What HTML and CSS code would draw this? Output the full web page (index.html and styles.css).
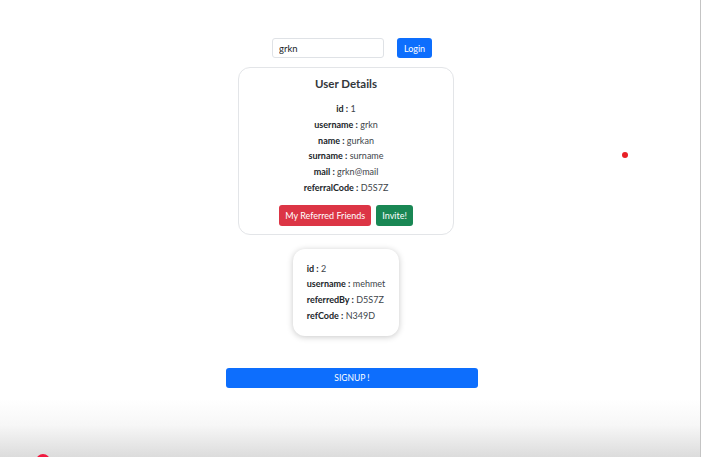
FILE: index.html
```html
<!DOCTYPE html>
<html>
<head>
<meta charset="utf-8">
<link rel="stylesheet" href="styles.css">
</head>
<body>
<div class="page">
  <main class="content">
    <div class="login-row">
      <input class="text-input" type="text" value="grkn">
      <button class="btn btn-primary btn-login">Login</button>
    </div>
    <section class="card user-card">
      <h2 class="card-title">User Details</h2>
      <div class="details">
        <p><b>id :</b> 1</p>
        <p><b>username :</b> grkn</p>
        <p><b>name :</b> gurkan</p>
        <p><b>surname :</b> surname</p>
        <p><b>mail :</b> grkn@mail</p>
        <p><b>referralCode :</b> D5S7Z</p>
      </div>
      <div class="actions">
        <button class="btn btn-danger">My Referred Friends</button>
        <button class="btn btn-success">Invite!</button>
      </div>
    </section>
    <section class="card friend-card">
      <p><b>id :</b> 2</p>
      <p><b>username :</b> mehmet</p>
      <p><b>referredBy :</b> D5S7Z</p>
      <p><b>refCode :</b> N349D</p>
    </section>
    <button class="btn btn-primary btn-signup">SIGNUP !</button>
  </main>
  <div class="shade"></div>
  <span class="cursor-dot"></span>
  <span class="corner-dot"></span>
</div>
</body>
</html>
```
FILE: styles.css
```css
* { box-sizing: border-box; }
html, body { margin: 0; padding: 0; background: #fff; }
body {
  font-family: Lato, "Open Sans", sans-serif;
  color: #212529;
  width: 702px;
  height: 457px;
  overflow: hidden;
}
.page {
  position: relative;
  width: 701px;
  height: 457px;
  border-right: 1px solid #c4c4c4;
  display: flex;
  flex-direction: column;
}
.content {
  display: flex;
  flex-direction: column;
  align-items: center;
  padding-top: 38px;
  padding-left: 2px;
}
.login-row {
  display: flex;
  align-items: center;
  gap: 13px;
  margin-left: 2px;
}
.text-input {
  width: 112px;
  height: 20px;
  border: 1px solid #dfe2e6;
  border-radius: 3px;
  padding: 0 6px;
  font-family: inherit;
  font-size: 9.5px;
  color: #212529;
  outline: none;
}
.btn {
  border: none;
  border-radius: 3px;
  color: #fff;
  font-family: inherit;
  font-size: 9px;
  padding: 0 6px;
  cursor: pointer;
}
.btn-primary { background: #0d6efd; }
.btn-danger { background: #dc3545; }
.btn-success { background: #198754; }
.btn-login { height: 20px; width: 35px; padding: 0; }
.card {
  background: #fff;
  border-radius: 12px;
}
.user-card {
  width: 216px;
  margin-top: 9px;
  margin-right: 10px;
  border: 1px solid #e3e5e8;
  padding: 7px 0 8px;
  display: flex;
  flex-direction: column;
  align-items: center;
}
.card-title {
  margin: 0;
  font-size: 11.5px;
  font-weight: 700;
  line-height: 18px;
  color: #33373b;
}
.details {
  margin-top: 8px;
  text-align: center;
}
p {
  margin: 0;
  font-size: 9px;
  line-height: 15.8px;
  color: #40454a;
}
p b { color: #212529; font-weight: 700; }
.actions {
  display: flex;
  gap: 5px;
  margin-top: 9px;
}
.actions .btn { height: 21px; }
.friend-card {
  margin-top: 14px;
  margin-right: 10px;
  padding: 12px 14px;
  box-shadow: 0 1px 6px rgba(0, 0, 0, 0.22);
}
.friend-card p { line-height: 15.7px; }
.btn-signup {
  margin-top: 32px;
  margin-left: 2px;
  width: 252px;
  height: 20px;
  font-size: 8.5px;
}
.shade {
  margin-top: auto;
  height: 58px;
  background: linear-gradient(to bottom, #ffffff 0%, #f7f7f7 45%, #dcdcdc 100%);
}
.cursor-dot {
  position: absolute;
  left: 622px;
  top: 152px;
  width: 6px;
  height: 6px;
  border-radius: 50%;
  background: #e81f26;
}
.corner-dot {
  position: absolute;
  left: 36px;
  top: 454px;
  width: 14px;
  height: 14px;
  border-radius: 50%;
  background: #f0193f;
}
```
